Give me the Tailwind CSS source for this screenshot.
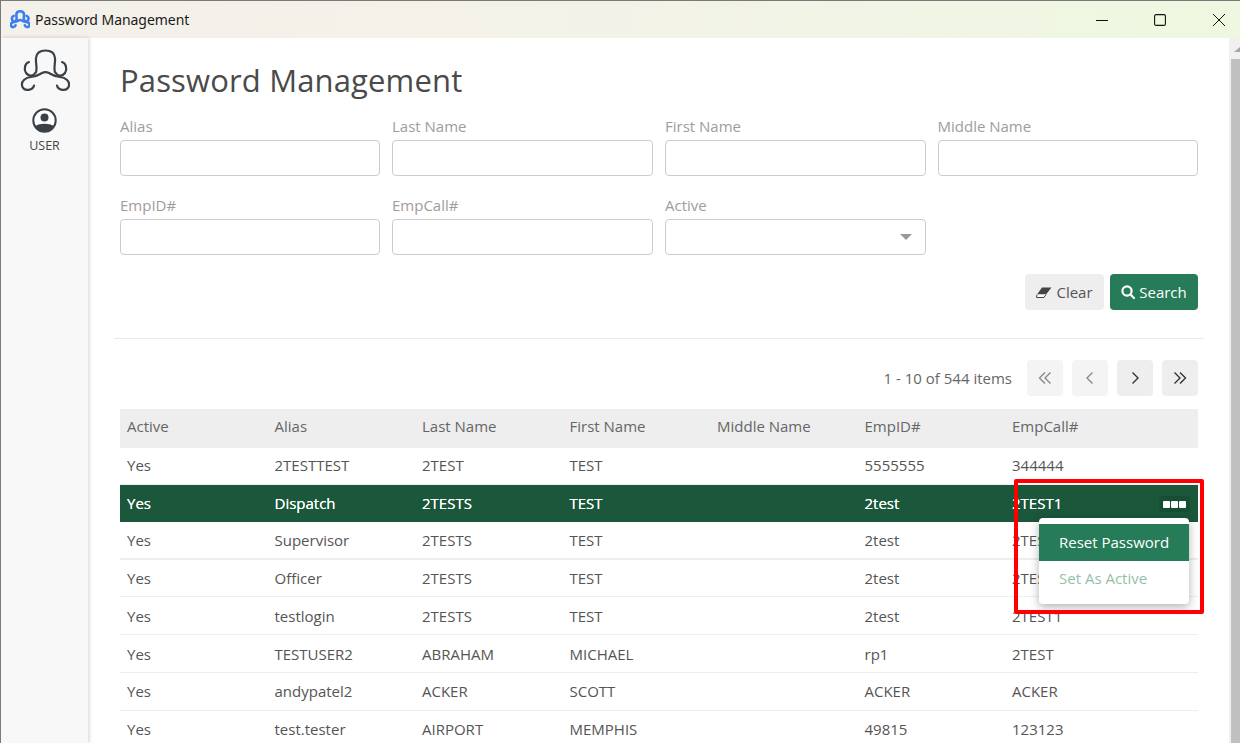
<!DOCTYPE html>
<html>
<head>
<meta charset="utf-8">
<script src="https://cdn.jsdelivr.net/npm/@tailwindcss/browser@4"></script>
</head>
<body class="m-0 overflow-hidden bg-white">
<div class="w-[1240px] h-[743px] flex flex-col overflow-hidden relative border-t border-l border-[#7a7a7a] font-['Open_Sans',sans-serif] text-[#555]">
  <!-- title bar -->
  <div class="h-[37px] shrink-0 flex items-center bg-gradient-to-r from-[#f4f0ea] via-[#f3f2e8] to-[#eef8e0]">
    <svg class="ml-[9px] w-[20px] h-[19px]" viewBox="19 48 50 46" fill="none" stroke="#3d7fec" stroke-width="6.500" stroke-linecap="round"><path d="M28 62 C24 63 22.500 69 25 73 C28 77 33 76 35 72 C36.500 68 34.500 63 35 58 C35.500 53 39 50.500 44.500 50.500 C50 50.500 53.500 53 54 58 C54.500 63 52.500 68 54 72 C56 76 61 77 64 73 C66.500 69 65 63 61 62"/><path d="M33 85.500 C32 90 24 92 21.500 87 C19 81 25 77.500 30 77 C36 76.500 39 74 41 73 C43 72 46 72 48 73 C50 74 53 76.500 59 77 C64 77.500 70 81 67.500 87 C65 92 57 90 56 85.500"/></svg>
    <span class="ml-[5px] text-[14px] tracking-[-0.05px] text-[#1a1a1a] font-['Noto_Sans',sans-serif]">Password Management</span>
    <div class="ml-auto flex items-center">
      <svg class="w-[12px] h-[12px] mr-[46px]" viewBox="0 0 12 12" stroke="#111" stroke-width="1" fill="none"><path d="M0 6.500 H12"/></svg>
      <svg class="w-[12px] h-[12px] mr-[47px]" viewBox="0 0 12 12" stroke="#111" stroke-width="1.100" fill="none"><rect x="0.600" y="0.600" width="10.800" height="10.800" rx="1.500"/></svg>
      <svg class="w-[12px] h-[12px] mr-[15px]" viewBox="0 0 12 12" stroke="#111" stroke-width="1" fill="none"><path d="M0 0 L12 12 M12 0 L0 12"/></svg>
    </div>
  </div>
  <div class="flex flex-1 min-h-0">
    <!-- sidebar -->
    <aside class="w-[87px] shrink-0 bg-[#f8f8f8] shadow-[1px_0_4px_rgba(0,0,0,0.18)] flex flex-col items-center z-10">
      <svg class="mt-[8px] w-[50px] h-[46px]" viewBox="19 46 50 46" fill="none" stroke="#3a4147" stroke-width="2.200" stroke-linecap="round"><path d="M28 62 C24 63 22.500 69 25 73 C28 77 33 76 35 72 C36.500 68 34.500 63 35 58 C35.500 53 39 50.500 44.500 50.500 C50 50.500 53.500 53 54 58 C54.500 63 52.500 68 54 72 C56 76 61 77 64 73 C66.500 69 65 63 61 62"/><path d="M33 85.500 C32 90 24 92 21.500 87 C19 81 25 77.500 30 77 C36 76.500 39 74 41 73 C43 72 46 72 48 73 C50 74 53 76.500 59 77 C64 77.500 70 81 67.500 87 C65 92 57 90 56 85.500"/></svg>
      <svg class="mt-[16px] w-[25px] h-[25px]" viewBox="0 0 25 25"><defs><clipPath id="c"><circle cx="12.500" cy="12.500" r="11"/></clipPath></defs><circle cx="12.500" cy="12.500" r="11.200" fill="#fff" stroke="#3a4147" stroke-width="2"/><circle cx="12.500" cy="9.500" r="4" fill="#3a4147"/><path d="M2 25 V19 C6 14.500 19 14.500 23 19 V25 Z" fill="#3a4147" clip-path="url(#c)"/></svg>
      <div class="mt-[5px] text-[12.500px] leading-[16px] text-[#444]">USER</div>
    </aside>
    <!-- main -->
    <main class="flex-1 min-w-0 pl-[26px] pr-[25px] relative">
      <h1 class="mt-[21px] ml-[6px] text-[31px] leading-[42px] font-normal text-[#4a4a4a] tracking-[0.15px]">Password Management</h1>
      <div class="ml-[6px] mr-[6px] mt-[15px] grid grid-cols-[260px_261px_260.500px_260px] gap-x-[12px] gap-y-[19px] text-[15px] text-[#a09c9c]">
        <label class="block"><div class="leading-[21px] mb-[3px]">Alias</div><div class="h-[36px] border border-[#ccc] rounded-[4px] bg-white"></div></label>
        <label class="block"><div class="leading-[21px] mb-[3px]">Last Name</div><div class="h-[36px] border border-[#ccc] rounded-[4px] bg-white"></div></label>
        <label class="block"><div class="leading-[21px] mb-[3px]">First Name</div><div class="h-[36px] border border-[#ccc] rounded-[4px] bg-white"></div></label>
        <label class="block"><div class="leading-[21px] mb-[3px]">Middle Name</div><div class="h-[36px] border border-[#ccc] rounded-[4px] bg-white"></div></label>
        <label class="block"><div class="leading-[21px] mb-[3px]">EmpID#</div><div class="h-[36px] border border-[#ccc] rounded-[4px] bg-white"></div></label>
        <label class="block"><div class="leading-[21px] mb-[3px]">EmpCall#</div><div class="h-[36px] border border-[#ccc] rounded-[4px] bg-white"></div></label>
        <label class="block"><div class="leading-[21px] mb-[3px]">Active</div><div class="h-[36px] border border-[#ccc] rounded-[4px] bg-white flex items-center justify-end pr-[13px]"><span class="w-0 h-0 border-l-[6px] border-r-[6px] border-t-[6px] border-l-transparent border-r-transparent border-t-[#999]"></span></div></label>
      </div>
      <div class="mr-[6px] mt-[19px] flex justify-end gap-[6px] text-[15px]">
        <button class="h-[36px] w-[79px] bg-[#eeeeee] rounded-[4px] flex items-center justify-center gap-[4px] text-[#555]">
          <svg class="w-[16px] h-[11px]" viewBox="0 0 16 11"><path d="M6 0.500 H15.500 L10 7.500 H1 Z" fill="#444"/><path d="M1 7.500 L0.500 10.500 H8 L10 7.500" fill="#fff" stroke="#444" stroke-width="1"/></svg>
          Clear</button>
        <button class="h-[36px] w-[88px] bg-[#267c58] rounded-[4px] flex items-center justify-center gap-[4px] text-white">
          <svg class="w-[14px] h-[14px]" viewBox="0 0 14 14" fill="none" stroke="#fff" stroke-width="2.200"><circle cx="6" cy="6" r="4.600"/><path d="M9.500 9.500 L13 13" stroke-linecap="round"/></svg>
          Search</button>
      </div>
      <div class="mt-[28px] h-px bg-[#eaeaea]"></div>
      <div class="mr-[6px] mt-[21px] flex items-center justify-end text-[15px] text-[#666]">
        <span class="mr-[15px]">1 - 10 of 544 items</span>
        <div class="flex gap-[9px]">
          <span class="w-[36px] h-[36px] bg-[#f4f4f4] rounded-[4px] flex items-center justify-center"><svg class="w-[14px] h-[14px]" viewBox="0 0 14 14" fill="none" stroke="#8a8a8a" stroke-width="1.400"><path d="M7 1.500 L1.500 7 L7 12.500 M12.500 1.500 L7 7 L12.500 12.500"/></svg></span>
          <span class="w-[36px] h-[36px] bg-[#f4f4f4] rounded-[4px] flex items-center justify-center"><svg class="w-[14px] h-[14px]" viewBox="0 0 14 14" fill="none" stroke="#8a8a8a" stroke-width="1.400"><path d="M9.500 1.500 L4 7 L9.500 12.500"/></svg></span>
          <span class="w-[36px] h-[36px] bg-[#eeeeee] rounded-[4px] flex items-center justify-center"><svg class="w-[14px] h-[14px]" viewBox="0 0 14 14" fill="none" stroke="#333" stroke-width="1.400"><path d="M4.500 1.500 L10 7 L4.500 12.500"/></svg></span>
          <span class="w-[36px] h-[36px] bg-[#eeeeee] rounded-[4px] flex items-center justify-center"><svg class="w-[14px] h-[14px]" viewBox="0 0 14 14" fill="none" stroke="#333" stroke-width="1.400"><path d="M1.500 1.500 L7 7 L1.500 12.500 M7 1.500 L12.500 7 L7 12.500"/></svg></span>
        </div>
      </div>
      <!-- table -->
      <div class="ml-[6px] mr-[6px] mt-[13px] text-[15px] text-[#555]">
        <div class="h-[39px] pb-[4px] bg-[#eeeeee] grid grid-cols-[147.500px_147.500px_147.500px_147.500px_147.500px_147.500px_1fr] items-center pl-[7px] text-[#666]"><span>Active</span><span>Alias</span><span>Last Name</span><span>First Name</span><span>Middle Name</span><span>EmpID#</span><span>EmpCall#</span></div>
        <div class="h-[37px] pb-[2px] border-b border-[#eee] grid grid-cols-[147.500px_147.500px_147.500px_147.500px_147.500px_147.500px_1fr] items-center pl-[7px]"><span>Yes</span><span>2TESTTEST</span><span>2TEST</span><span>TEST</span><span></span><span>5555555</span><span>344444</span></div>
        <div class="h-[37px] bg-[#1a573b] text-white font-medium [text-shadow:0_0_0.5px_white] grid grid-cols-[147.500px_147.500px_147.500px_147.500px_147.500px_147.500px_1fr] items-center pl-[7px] relative"><span>Yes</span><span>Dispatch</span><span>2TESTS</span><span>TEST</span><span></span><span>2test</span><span>2TEST1</span>
          <span class="absolute right-[8px] top-[11px] w-[31px] h-[16px] bg-[#174f35] rounded-[3px] flex items-center justify-center gap-[1px]"><i class="w-[7px] h-[7px] bg-white block rounded-[1px]"></i><i class="w-[7px] h-[7px] bg-white block rounded-[1px]"></i><i class="w-[7px] h-[7px] bg-white block rounded-[1px]"></i></span>
        </div>
        <div class="h-[38px] border-b-2 border-[#eee] grid grid-cols-[147.500px_147.500px_147.500px_147.500px_147.500px_147.500px_1fr] items-center pl-[7px]"><span>Yes</span><span>Supervisor</span><span>2TESTS</span><span>TEST</span><span></span><span>2test</span><span>2TEST1</span></div>
        <div class="h-[37px] border-b border-[#eee] grid grid-cols-[147.500px_147.500px_147.500px_147.500px_147.500px_147.500px_1fr] items-center pl-[7px]"><span>Yes</span><span>Officer</span><span>2TESTS</span><span>TEST</span><span></span><span>2test</span><span>2TEST1</span></div>
        <div class="h-[38px] pt-[2px] border-b border-[#eee] grid grid-cols-[147.500px_147.500px_147.500px_147.500px_147.500px_147.500px_1fr] items-center pl-[7px]"><span>Yes</span><span>testlogin</span><span>2TESTS</span><span>TEST</span><span></span><span>2test</span><span>2TEST1</span></div>
        <div class="h-[38px] pt-[2px] border-b border-[#eee] grid grid-cols-[147.500px_147.500px_147.500px_147.500px_147.500px_147.500px_1fr] items-center pl-[7px]"><span>Yes</span><span>TESTUSER2</span><span>ABRAHAM</span><span>MICHAEL</span><span></span><span>rp1</span><span>2TEST</span></div>
        <div class="h-[38px] border-b border-[#eee] grid grid-cols-[147.500px_147.500px_147.500px_147.500px_147.500px_147.500px_1fr] items-center pl-[7px]"><span>Yes</span><span>andypatel2</span><span>ACKER</span><span>SCOTT</span><span></span><span>ACKER</span><span>ACKER</span></div>
        <div class="h-[37px] grid grid-cols-[147.500px_147.500px_147.500px_147.500px_147.500px_147.500px_1fr] items-center pl-[7px]"><span>Yes</span><span>test.tester</span><span>AIRPORT</span><span>MEMPHIS</span><span></span><span>49815</span><span>123123</span></div>
      </div>
    </main>
    <!-- scrollbar -->
    <div class="w-[11px] shrink-0 bg-[#f0f0f0] flex flex-col overflow-hidden">
      <span class="mt-[9px] ml-[5px] w-0 h-0 border-l-[6px] border-r-[6px] border-b-[5px] border-l-transparent border-r-transparent border-b-[#a5a5a5]"></span>
      <div class="mt-[7px] ml-[2px] w-[9px] flex-1 bg-[#c0c0c0]"></div>
    </div>
  </div>
  <!-- context menu -->
  <div class="absolute left-[1038px] top-[517px] w-[150px] h-[86px] bg-white rounded-[4px] shadow-[0_3px_10px_rgba(0,0,0,0.3)] z-20 pt-[6px] text-[15px]">
    <div class="h-[37px] bg-[#267c58] text-white pl-[20px] flex items-center">Reset Password</div>
    <div class="h-[35px] text-[#93bfa9] pl-[20px] flex items-center">Set As Active</div>
  </div>
  <!-- annotation -->
  <div class="absolute left-[1013px] top-[478px] w-[190px] h-[135px] border-[4px] border-[#ff0000] rounded-[2px] z-30"></div>
</div>
</body>
</html>
